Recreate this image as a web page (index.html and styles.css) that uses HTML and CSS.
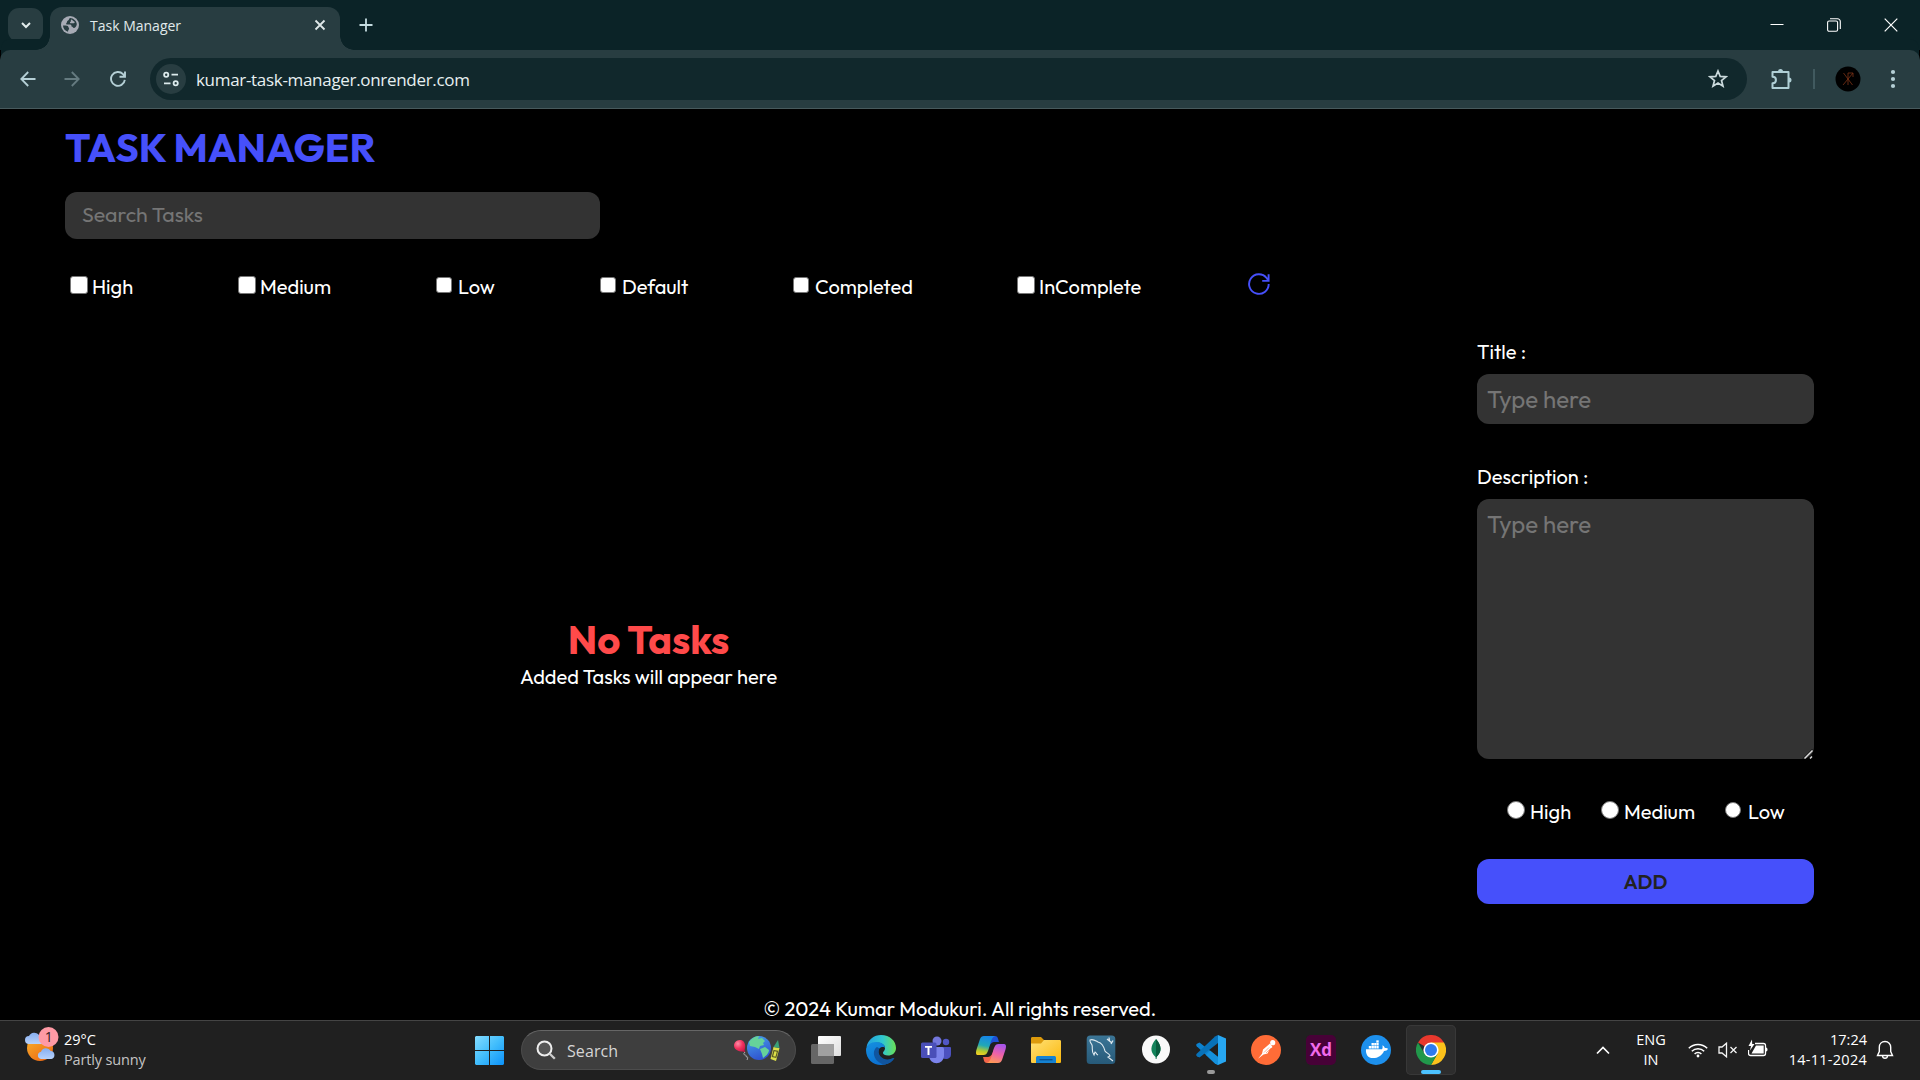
FILE: index.html
```html
<!DOCTYPE html>
<html lang="en">
<head>
<meta charset="utf-8">
<title>Task Manager</title>
<link rel="stylesheet" href="styles.css">
</head>
<body>
<div class="desktop">
  <header class="tab-strip">
    <button class="tab-search" aria-label="Search tabs"><svg width="12" height="12" viewBox="0 0 12 12"><path d="M2 4l4 4 4-4" fill="none" stroke="#e2ecec" stroke-width="2"/></svg></button>
    <div class="tab">
      <svg class="favicon" width="18" height="18" viewBox="0 0 18 18"><circle cx="9" cy="9" r="9" fill="#a7abb5"/><path d="M9.200 2C7.500 2.500 8.500 4 7 4.600 5.500 5 6.500 6.500 5.500 7c-.8.400-.3 1.600.7 1.600h3c1 0 1.300 1 1.300 1.800 1.600.2 1.200 1.600 2.600 1.500 1.500-.2 2.700-2 2.700-3.800C15.500 5 12.500 2.200 9.200 2zM2 9.500c0 3 2 5.300 5 6.200l.3-1.700c1-.3 1-1.200.5-1.900-.3-1.900-1.300-2.600-3-2.600z" fill="#283d41"/><path d="M10 3.500c2 0 1.700 1.800 3.200 2 1 .3.500 1.700-.6 1.700H9.500c-.9 0-.5-1.200.2-1.500z" fill="#a7abb5"/></svg>
      <span class="tab-title">Task Manager</span>
      <svg class="tab-close" width="12" height="12" viewBox="0 0 12 12"><path d="M1.500 1.500l9 9M10.500 1.500l-9 9" stroke="#dfe8e9" stroke-width="1.800"/></svg>
    </div>
    <svg class="new-tab" width="14" height="14" viewBox="0 0 14 14"><path d="M7 .5v13M.5 7h13" stroke="#c4dce0" stroke-width="1.800"/></svg>
    <div class="window-controls">
      <svg width="14" height="14" viewBox="0 0 14 14"><path d="M.5 6.500h13" stroke="#fff"/></svg>
      <svg width="14" height="14" viewBox="0 0 14 14"><rect x=".6" y="3" width="10" height="10.300" rx="1.500" fill="none" stroke="#fff" stroke-width="1.100"/><path d="M3 .8h7.500a2.800 2.800 0 0 1 2.800 2.800V11" fill="none" stroke="#fff" stroke-width="1.100"/></svg>
      <svg width="14" height="14" viewBox="0 0 14 14"><path d="M.7.7l12.600 12.600M13.300.7L.7 13.300" stroke="#fff" stroke-width="1.200"/></svg>
    </div>
  </header>

  <div class="toolbar">
    <svg class="nav-icon" width="16" height="16" viewBox="0 0 16 16"><path d="M15.500 8H1.800M8.200 1L1.300 8l6.900 7" fill="none" stroke="#b5d0d6" stroke-width="1.800"/></svg>
    <svg class="nav-icon" width="16" height="16" viewBox="0 0 16 16"><path d="M.5 8h13.700M7.800 1l6.900 7-6.900 7" fill="none" stroke="#657b80" stroke-width="1.800"/></svg>
    <svg class="nav-icon" width="16" height="16" viewBox="0 0 16 16"><path d="M14.800 8.800A6.900 6.900 0 1 1 13 3.200l1.700 1.900M15 .5v5.200H9.500" fill="none" stroke="#b5d0d6" stroke-width="1.900"/></svg>
    <div class="omnibox">
      <span class="site-info"><svg width="18" height="16" viewBox="0 0 18 16" fill="none" stroke="#dceaec" stroke-width="1.800"><circle cx="4.200" cy="3.700" r="2.100"/><path d="M9.500 3.700h6.500M2 12.300h6.500"/><circle cx="13.700" cy="12.300" r="2.100"/></svg></span>
      <span class="url">kumar-task-manager.onrender.com</span>
      <svg class="bookmark" width="20" height="20" viewBox="0 0 20 20"><path d="M10 2l2.200 5.400 5.800.4-4.500 3.700 1.500 5.700-5-3.100-5 3.100 1.500-5.700L2 7.800l5.800-.4z" fill="none" stroke="#cbdadd" stroke-width="1.700"/></svg>
    </div>
    <svg class="extensions" width="22" height="22" viewBox="0 0 22 22"><path d="M2.500 4h16v16h-16v-4.800c4.600 0 4.600-6.400 0-6.400z" fill="none" stroke="#b0d0d6" stroke-width="2" stroke-linejoin="round"/><path d="M8 3.500a2.500 2.500 0 0 1 5 0zM19 9.500a2.500 2.500 0 0 1 0 5z" fill="#b0d0d6"/></svg>
    <span class="divider"></span>
    <svg class="avatar" width="26" height="26" viewBox="0 0 26 26"><circle cx="13" cy="13" r="12.500" fill="#000"/><path d="M8.500 7l9 12M18 7L8 19M13 7v12M13 7h5v4" fill="none" stroke="#7c3217" stroke-width=".8"/></svg>
    <svg class="menu" width="6" height="20" viewBox="0 0 6 20" fill="#b5d0d6"><circle cx="3" cy="3" r="2.100"/><circle cx="3" cy="10" r="2.100"/><circle cx="3" cy="17" r="2.100"/></svg>
  </div>

  <main class="page">
    <h1 class="title">TASK MANAGER</h1>
    <div class="search-field"><span>Search Tasks</span></div>
    <div class="filters">
      <label class="filter"><i class="check"></i><span>High</span></label>
      <label class="filter"><i class="check"></i><span>Medium</span></label>
      <label class="filter"><i class="check small"></i><span>Low</span></label>
      <label class="filter"><i class="check small"></i><span>Default</span></label>
      <label class="filter"><i class="check small"></i><span>Completed</span></label>
      <label class="filter"><i class="check"></i><span>InComplete</span></label>
      <svg class="refresh" width="22" height="22" viewBox="0 0 22 22"><path d="M20.700 11A9.800 9.800 0 1 1 18.600 5l1.800 2.500M20.600 1.200v6.700h-6.400" fill="none" stroke="#4650fb" stroke-width="1.900"/></svg>
    </div>
    <div class="content">
      <section class="empty">
        <h2 class="empty-title">No Tasks</h2>
        <p class="empty-text">Added Tasks will appear here</p>
      </section>
      <section class="form">
        <div class="label">Title :</div>
        <div class="input">Type here</div>
        <div class="label l-desc">Description :</div>
        <div class="input textarea">Type here<svg class="grip" width="11" height="11" viewBox="0 0 11 11"><path d="M1 10.500L10.500 1M6.500 10.500l4-4" stroke="#111" stroke-width="1"/><path d="M2.500 10.500l8-8" stroke="#ddd" stroke-width="1.500"/><path d="M8 10.500l2-2" stroke="#ddd" stroke-width="1.500"/></svg></div>
        <div class="priorities">
          <label class="priority"><i class="radio"></i><span>High</span></label>
          <label class="priority"><i class="radio"></i><span>Medium</span></label>
          <label class="priority"><i class="radio small"></i><span>Low</span></label>
        </div>
        <button class="add">ADD</button>
      </section>
    </div>
    <footer class="copyright">© 2024 Kumar Modukuri. All rights reserved.</footer>
  </main>

  <nav class="taskbar">
    <div class="weather">
      <svg width="36" height="38" viewBox="0 0 36 38">
        <defs><linearGradient id="sun" x1="0" y1="0" x2=".7" y2="1"><stop offset="0" stop-color="#f8b62d"/><stop offset="1" stop-color="#ee6b14"/></linearGradient><linearGradient id="cloud" x1="0" y1="0" x2="0" y2="1"><stop offset="0" stop-color="#86aef0"/><stop offset="1" stop-color="#b7d2fb"/></linearGradient></defs>
        <circle cx="16" cy="22" r="13" fill="url(#sun)"/>
        <path d="M5 18a4 4 0 0 1 0-8A6 6 0 0 1 15 9l4 9z" fill="url(#cloud)"/>
        <path d="M17 33a3.700 3.700 0 0 1 0-7.300 5.300 5.300 0 0 1 9.700-.6 4 4 0 0 1 .6 7.900z" fill="url(#cloud)"/>
        <circle cx="24.500" cy="11" r="10" fill="#ff9aa5"/>
        <text x="24.800" y="16" text-anchor="middle" class="badge">1</text>
      </svg>
      <div class="weather-text"><div>29°C</div><div class="w-desc">Partly sunny</div></div>
    </div>
    <svg class="start" width="29" height="29" viewBox="0 0 29 29"><defs><linearGradient id="win" x1="0" y1="0" x2="1" y2="1"><stop offset="0" stop-color="#84dcff"/><stop offset=".5" stop-color="#41bdfc"/><stop offset="1" stop-color="#0c92fa"/></linearGradient></defs><path d="M1 0h13v14H0V1zM15 0h13l1 1v13H15zM0 15h14v14H1l-1-1zM15 15h14v13l-1 1H15z" fill="url(#win)"/></svg>
    <div class="search-pill">
      <svg width="20" height="20" viewBox="0 0 20 20"><circle cx="8.500" cy="8.500" r="7" fill="#555" stroke="#eee" stroke-width="2"/><path d="M13.500 13.500l5.300 5.300" stroke="#ccc" stroke-width="2.300"/></svg>
      <span class="pill-text">Search</span>
      <svg class="doodle" width="48" height="30" viewBox="0 0 48 30">
        <defs><radialGradient id="bal" cx=".35" cy=".3" r=".8"><stop offset="0" stop-color="#ff8ca6"/><stop offset=".5" stop-color="#f2335f"/><stop offset="1" stop-color="#c81545"/></radialGradient><linearGradient id="sea" x1="0" y1="0" x2=".4" y2="1"><stop offset="0" stop-color="#49a5ed"/><stop offset="1" stop-color="#3055d0"/></linearGradient></defs>
        <path d="M6.500 5c3.500-.3 5.700 2.500 5.700 6 0 1.800-.4 3.300-.6 4.300l.7 1.900-2.500-.6C5.500 16.500 1 14.500 1 10.500 1 7.500 3.500 5.200 6.500 5z" fill="url(#bal)"/><path d="M12 17c-4 4 3 2 1 5 2-1 2 1 1 3" fill="none" stroke="#aaa"/>
        <circle cx="26" cy="13" r="12" fill="url(#sea)"/><path d="M16 7c2-3 6-6 10-6l-1 3 4-1 3 3-2 2 1 2-4 1-1 3-4-2-5-1zM27 14l5-2 4 3c0 3-3 6-6 8l-1-4z" fill="#66d29a"/>
        <path d="M40.500 12l6 1-3.500 13-5.500-2z" fill="#dbe04a"/><path d="M40.500 12l4.500-7 1.500 8z" fill="#3aa177"/><path d="M41 15.500l3.500.8-1.600 6-3.500-.8z" fill="none" stroke="#5b5c25" stroke-width="1.200"/>
      </svg>
    </div>
    <div class="apps">
      <span class="app"><svg width="30" height="30" viewBox="0 0 30 30"><defs><linearGradient id="tv" x1="0" y1="0" x2="1" y2="1"><stop stop-color="#fff"/><stop offset="1" stop-color="#dedede"/></linearGradient></defs><rect x="7" y="1" width="23" height="20" rx="1" fill="url(#tv)"/><rect x="0" y="9" width="23" height="20" rx="1.500" fill="#666"/><path d="M7 9h16v12H7z" fill="#a0a0a0"/></svg></span>
      <span class="app"><svg width="30" height="30" viewBox="0 0 30 30"><defs><linearGradient id="e1" x1="0" y1=".4" x2="1" y2=".4"><stop stop-color="#229fdf"/><stop offset=".55" stop-color="#30c8d0"/><stop offset="1" stop-color="#6be054"/></linearGradient><linearGradient id="e2" x1="0" y1="0" x2=".5" y2="1"><stop stop-color="#1590e0"/><stop offset="1" stop-color="#0b6fd0"/></linearGradient></defs><path d="M.5 12C2 4.500 8 0 15 0c9 0 15 6 15 13 0 5-4 7.500-8 7.500-3 0-5-1-5-2.500s2-2 2-5c0-4-5-6-10-5-5 .8-8 4-8.500 4z" fill="url(#e1)"/><path d="M0 15c0-5 5-8 10-8 6 0 9 3 9 6 0-1-4-2-6 1-3 5 3 12 9 11 3-.5 5-2 6-2-2 4-7 7-13 7C7 30 0 24 0 15z" fill="url(#e2)"/><path d="M11 12c-6 4-3 15 7 17.500 5-.5 8.500-3 10.500-6.500-2-.5-3 1.500-7 1.500-6 0-11-6-8-11z" fill="#10559f"/></svg></span>
      <span class="app"><svg width="30" height="30" viewBox="0 0 30 30"><circle cx="16" cy="6" r="4.500" fill="#7377dc"/><circle cx="25" cy="7" r="3.200" fill="#5157c5"/><path d="M20 12h9a1 1 0 0 1 1 1v6c0 5-5 6-9 4z" fill="#4c51bf"/><path d="M9 12h12a2 2 0 0 1 2 2v6c0 11-15 11-15 0z" fill="#7b83eb"/><rect x="0" y="7.500" width="15.500" height="15.500" rx="1.500" fill="#4a4fb8"/><path d="M4 11h7v1.800H8.500V20h-2v-7.200H4z" fill="#fff"/></svg></span>
      <span class="app"><svg width="30" height="30" viewBox="0 0 30 30"><defs><linearGradient id="c1" x1=".5" y1="0" x2=".3" y2="1"><stop stop-color="#1686e8"/><stop offset=".5" stop-color="#21a8b5"/><stop offset=".8" stop-color="#b7cb2c"/><stop offset="1" stop-color="#f0cd23"/></linearGradient><linearGradient id="c2" x1=".6" y1="0" x2=".3" y2="1"><stop stop-color="#a855ea"/><stop offset=".5" stop-color="#ef62a8"/><stop offset="1" stop-color="#ff9a54"/></linearGradient></defs><path d="M14 1h5c3 0 3 3 4 6h-5c-3 0-5 4-6 8z" fill="#1d50d5"/><path d="M16 28h-5c-3 0-3-3-4-6h5c3 0 5-4 6-8z" fill="#f3664a"/><path d="M8 1h11c-5 2-5 12-8 17-1 2-3 2-5 2H2c-3 0-2-4-1-7L4 4c.8-2 2-3 4-3z" fill="url(#c1)"/><path d="M22 28H11c5-2 5-12 8-17 1-2 3-2 5-2h4c3 0 2 4 1 7l-3 9c-.8 2-2 3-4 3z" fill="url(#c2)"/></svg></span>
      <span class="app"><svg width="30" height="30" viewBox="0 0 30 30"><defs><linearGradient id="fo" x1="0" y1="0" x2="1" y2="1"><stop stop-color="#ffe177"/><stop offset="1" stop-color="#fbb80c"/></linearGradient></defs><path d="M0 3.500C0 2.500.6 2 1.500 2H10l3 3h15v10H0z" fill="#dc9a0c"/><path d="M0 8.500h10l3-3.500h15.500c1 0 1.500.5 1.500 1.500v20c0 1-.5 1.500-1.500 1.500h-27C.5 28 0 27.500 0 26.500z" fill="url(#fo)"/><path d="M5 28v-5.500C5 21.500 6 21 7 21h16c1 0 2 .5 2 1.500V28z" fill="#1582d2"/><path d="M8.500 24.700h13" stroke="#0a4f8e" stroke-width="1.300"/></svg></span>
      <span class="app"><svg width="30" height="30" viewBox="0 0 30 30"><defs><linearGradient id="my" x1="0" y1="0" x2="0" y2="1"><stop stop-color="#3b7596"/><stop offset="1" stop-color="#275a79"/></linearGradient></defs><rect x=".7" y=".5" width="28.600" height="28.500" rx="3.500" fill="url(#my)"/><path d="M12 20c-2-1-2-3-3-3l-1 3c-3-4-1-7-2-10C5 8 3.500 7 4 5c3-1.500 6 1 8 2 4 1 6 5 7 9 1 2 4 2 5 5l-2 1 5 4" fill="none" stroke="#e0eaf0" stroke-width="1.100"/><path d="M21 4l5 4M23 2.500l.5 3.500M27 5.500l-2 3.500" fill="none" stroke="#e0eaf0" stroke-width="1.300"/></svg></span>
      <span class="app"><svg width="30" height="30" viewBox="0 0 30 30"><circle cx="15" cy="14.500" r="14" fill="#f9f9f9"/><path d="M15 4c6 7 6 13 .5 18l-.2 2h-.6l-.2-2C9 17 9 11 15 4z" fill="#12835a"/><path d="M15 4c6 7 6 13 .5 18l-.2 2H15z" fill="#085c3e"/></svg></span>
      <span class="app running"><svg width="30" height="30" viewBox="0 0 30 30"><path d="M22 0L30 3.500v23L22 30z" fill="#27a7f2"/><path d="M22 30v-8L3.500 7.500 1 8.800C0 9.500 0 10.500.7 11.300L19 28.500z" fill="#0c82cf"/><path d="M22 0v8L3.500 22.500 1 21.200c-1-.7-1-1.700-.3-2.500L19 1.500z" fill="#0872b9"/><path d="M22 22v8l-3-1.500L10 20l4-4.500z" fill="#1590dc"/></svg></span>
      <span class="app"><svg width="30" height="30" viewBox="0 0 30 30"><circle cx="15" cy="15" r="15" fill="#ff6c37"/><circle cx="21.700" cy="7.700" r="2.600" fill="#fff"/><path d="M19 8.500l2.500 3.500-3 2.500-2 4-4 1-5.500 4.200 4-5 1-4.200z" fill="#fff"/><path d="M13 17.500l5-5M15 18l5-5" stroke="#ff9c79" stroke-width=".8"/></svg></span>
      <span class="app"><span class="xd">Xd</span></span>
      <span class="app"><svg width="30" height="30" viewBox="0 0 30 30"><circle cx="15" cy="15" r="15" fill="#1d90ed"/><path d="M5 14.200h16c1-1 .5-3 .5-4 1.500.8 2.300 2 2.300 3 1-.2 2.500-.2 3.200.5-.6 1.500-2 2.200-4 2.200C21 20.500 17 23 12 23c-5 0-7.500-3.500-7-8.800z" fill="#fff"/><path d="M7.800 12.200h9.900M10.500 9.300h7.200" stroke="#fff" stroke-width="2.500" stroke-dasharray="2.400 .3"/><path d="M15.300 6.500h2.400" stroke="#fff" stroke-width="2.300"/></svg></span>
      <span class="app active"><svg width="30" height="30" viewBox="0 0 30 30"><path d="M15 15L2 7.500A15 15 0 0 1 28 7.500z" fill="#e8382d"/><path d="M15 7.500h13A15 15 0 0 1 15 30L21.500 18.800z" fill="#fcc21b"/><path d="M8.500 18.700L2 7.500A15 15 0 0 0 15 30l6.500-11.200z" fill="#21984b"/><circle cx="15" cy="15" r="7.600" fill="#fff"/><circle cx="15" cy="15" r="6" fill="#2f7bee"/></svg></span>
    </div>
    <div class="tray">
      <svg class="chev" width="14" height="10" viewBox="0 0 14 10"><path d="M1 8.500l6-6 6 6" fill="none" stroke="#fff" stroke-width="1.700"/></svg>
      <div class="lang"><div>ENG</div><div>IN</div></div>
      <svg class="wifi" width="20" height="16" viewBox="0 0 20 16" fill="none" stroke="#fff" stroke-width="1.500"><path d="M.8 6.200a13 13 0 0 1 18.400 0M3.800 9.200a8.800 8.800 0 0 1 12.400 0M6.600 12a4.800 4.800 0 0 1 6.800 0"/><circle cx="10" cy="14" r="1.400" fill="#fff" stroke="none"/></svg>
      <svg class="sound" width="20" height="16" viewBox="0 0 20 16" fill="none" stroke="#f4f4f4" stroke-width="1.300"><path d="M1 5h3l4.500-3.800v13.600L4 11H1z"/><path d="M12.500 5l6 6M18.500 5l-6 6"/></svg>
      <svg class="battery" width="20" height="18" viewBox="0 0 20 18"><path d="M7 4.500h8.500a2 2 0 0 1 2 2v8a2 2 0 0 1-2 2h-13a2 2 0 0 1-2-2V11" fill="none" stroke="#fff" stroke-width="1.300"/><path d="M8 6.500h7.700v8H3.500zM18 8.500c2 0 2 4 0 4zM4 .5L.5 7H3l-1 4.500L6.500 5H4.200z" fill="#fff"/></svg>
      <div class="clock"><div>17:24</div><div class="date">14-11-2024</div></div>
      <svg class="bell" width="18" height="20" viewBox="0 0 18 20" fill="none" stroke="#fff" stroke-width="1.400"><path d="M9 1.500c-3.500 0-5.700 2.500-5.700 5.700v4.300L1.500 15.500h15l-1.800-4V7.200C14.700 4 12.500 1.500 9 1.500zM6.500 16c.3 3 4.700 3 5 0"/></svg>
    </div>
  </nav>
</div>
</body>
</html>
```
FILE: styles.css
```css
* { box-sizing: border-box; }
body { margin: 0; background: #000; overflow: hidden; }
svg { display: block; flex: none; }
button { border: 0; padding: 0; font: inherit; }
h1, h2, p { margin: 0; }

.desktop {
  width: 1920px;
  height: 1080px;
  display: flex;
  flex-direction: column;
  font-family: "Open Sans", "Noto Sans", sans-serif;
}

/* Browser tab strip */
.tab-strip { height: 50px; flex: none; display: flex; background: #0b2327; padding-left: 8px; }
.tab-search {
  width: 35px; height: 34px; margin: 8px 7px 0 0; border-radius: 11px;
  background: #283d41; display: flex; align-items: center; justify-content: center;
}
.tab {
  position: relative; width: 290px; height: 43px; margin-top: 7px; padding: 0 14px 7px 11px;
  border-radius: 12px 12px 0 0; background: #283d41; display: flex; align-items: center;
}
.tab::before, .tab::after { content: ""; position: absolute; bottom: 0; width: 14px; height: 14px; }
.tab::before { left: -14px; background: radial-gradient(circle at 0 0, transparent 13.500px, #283d41 14px); }
.tab::after { right: -14px; background: radial-gradient(circle at 100% 0, transparent 13.500px, #283d41 14px); }
.tab-title { margin-left: 11px; padding-top: 1px; font-size: 14px; line-height: 20px; color: #e0eaeb; white-space: nowrap; }
.tab-close { margin-left: auto; }
.new-tab { margin: 18px 0 0 19px; }
.window-controls { margin: 18px 22px 0 auto; display: flex; gap: 43px; }

/* Browser toolbar */
.toolbar {
  height: 59px; flex: none; display: flex; align-items: center; background: #283d41;
  border-bottom: 1px solid #485a5d; border-radius: 10px 10px 0 0; padding-left: 20px;
  box-shadow: 0 -12px 0 -1px #0b2327;
}
.nav-icon { margin-right: 28px; }
.nav-icon + .nav-icon + .nav-icon { margin: 0 24px 0 2px; }
.omnibox {
  width: 1597px; height: 42px; border-radius: 21px; background: #11282c;
  display: flex; align-items: center; padding: 0 19px 0 6px;
}
.site-info { width: 30px; height: 30px; border-radius: 50%; background: #283d41; display: flex; align-items: center; justify-content: center; }
.url { margin-left: 10px; padding-top: 1px; font-size: 17px; line-height: 24px; letter-spacing: -0.310px; color: #e7f0f1; white-space: nowrap; }
.bookmark { margin-left: auto; }
.extensions { margin-left: 23px; }
.divider { width: 2px; height: 20px; background: #415a5f; margin-left: 21px; }
.avatar { margin-left: 20px; }
.menu { margin-left: 29px; }

/* Task manager page */
.page {
  height: 911px; flex: none; overflow: hidden; background: #000; color: #fff;
  padding: 13px 0 0 65px; display: flex; flex-direction: column;
  font-family: Outfit, Lato, sans-serif; font-size: 20px; line-height: 24px; white-space: nowrap;
}
.title { font-size: 40px; line-height: 50px; font-weight: 700; color: #4650fb; }
.search-field {
  width: 535px; height: 47px; margin-top: 20px; border-radius: 12px; background: #333;
  color: #757575; font-size: 21.300px; padding: 0 0 2px 17px; display: flex; align-items: center;
}
.filters {
  height: 30px; margin: 31px 0 0 5px; display: grid; align-items: center;
  grid-template-columns: 168px 198px 164px 193px 224px 232px auto;
}
.filter, .priority { display: flex; align-items: center; }
.filter span { padding-top: 3px; }
.check, .radio {
  flex: none; width: 18px; height: 18px; margin-right: 4px; background: #fff;
  border: 1px solid #767676; border-radius: 3px;
}
.check { margin-top: -1px; }
.radio { border-radius: 50%; margin-right: 5px; }
.small { width: 16px; height: 16px; margin-right: 7px; }
.check.small { margin-right: 6px; }
.refresh { margin-top: -3px; margin-left: -1px; }
.content { display: flex; justify-content: space-between; padding-right: 106px; }
.empty { width: 1167px; padding-top: 314px; text-align: center; }
.empty-title { font-size: 40px; line-height: 50px; font-weight: 700; color: #ff4a4a; }
.empty-text { margin-top: 1px; }
.form { width: 337px; padding-top: 40px; display: flex; flex-direction: column; }
.l-desc { margin-top: 41px; }
.input {
  position: relative; height: 50px; margin-top: 10px; border-radius: 12px; background: #333;
  color: #757575; font-size: 24px; line-height: 50px; padding-left: 10px;
}
.textarea { height: 260px; }
.grip { position: absolute; right: 1px; bottom: 0; }
.priorities { height: 24px; margin-top: 40px; padding-left: 30px; display: grid; grid-template-columns: 94px 124px auto; align-items: center; }
.priority .radio { margin-top: -4px; }
.priority span { padding-top: 1px; }
.add {
  height: 45px; margin-top: 36px; border-radius: 12px; background: #4650fb; color: #222;
  font-size: 20px; font-weight: 600; line-height: 45px; text-align: center;
}
.copyright { margin-top: auto; width: 1790px; text-align: center; margin-bottom: -1px; }

/* Windows taskbar */
.taskbar {
  height: 60px; flex: none; display: flex; background: #202020; border-top: 1px solid #444;
  color: #fff; font-size: 14.500px; line-height: 20px; white-space: nowrap;
}
.weather { width: 475px; padding: 5px 0 0 24px; display: flex; }
.weather-text { margin: 4px 0 0 4px; }
.w-desc { color: #c4c4c4; letter-spacing: -0.150px; }
.badge { font: 14px "Open Sans", sans-serif; fill: #331a1c; }
.start { margin-top: 15px; }
.search-pill {
  width: 275px; height: 40px; margin: 9px 0 0 17px; border-radius: 20px; background: #3e3e3e;
  border: 1px solid #4c4c4c; border-top-color: #666; display: flex; align-items: center; padding: 0 14px;
}
.pill-text { margin-left: 11px; padding-top: 1px; font-size: 16px; letter-spacing: 0.100px; color: #d6d6d6; }
.doodle { margin-left: auto; }
.apps { display: flex; margin-left: 5px; gap: 5px; }
.app {
  position: relative; width: 50px; height: 50px; margin-top: 4px; border-radius: 5px;
  display: flex; align-items: center; justify-content: center;
}
.active { background: #2d2d2d; box-shadow: inset 0 0 0 1px #383838; }
.running::after, .active::after {
  content: ""; position: absolute; bottom: 1px; left: 21px; width: 8px; height: 4px; border-radius: 2px; background: #999;
}
.active::after { left: 15px; width: 20px; background: #4cc2ff; }
.xd {
  width: 30px; height: 30px; border-radius: 5px; background: #470137; color: #f06bec;
  font: 700 17px/29px "Open Sans", sans-serif; text-align: center;
}
.tray { margin-left: 140px; display: flex; flex: 1; }
.chev { margin-top: 24px; }
.lang { width: 30px; margin: 9px 0 0 26px; text-align: center; }
.wifi { margin: 21px 0 0 22px; }
.sound { margin: 21px 0 0 10px; }
.battery { margin: 18px 0 0 10px; }
.clock { width: 81px; margin: 9px 0 0 18px; text-align: right; }
.date { letter-spacing: 0.270px; }
.bell { margin: 19px 0 0 9px; }
```
